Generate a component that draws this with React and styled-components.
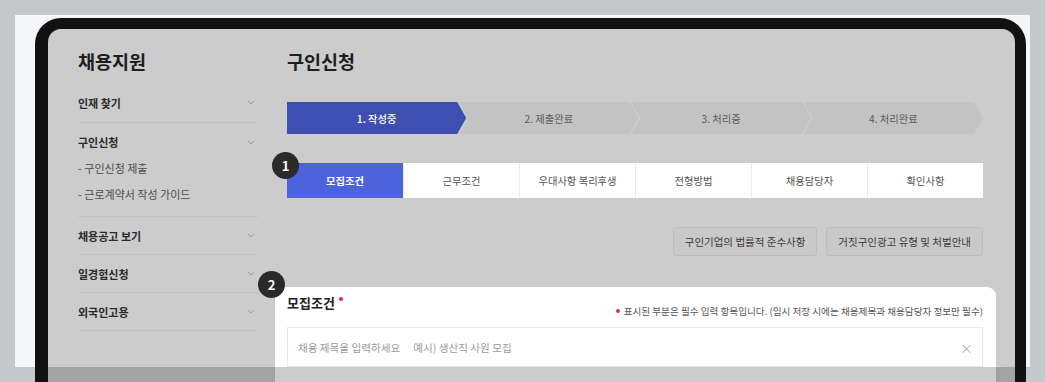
import React from 'react'
import styled, { createGlobalStyle } from 'styled-components'

const GlobalStyle = createGlobalStyle`
  html, body { margin: 0; padding: 0; }
  body {
    background: #c6c7cb;
    font-family: "Noto Sans CJK KR", "Noto Sans", sans-serif;
  }
  * { box-sizing: border-box; }
`

const steps = ['1. 작성중', '2. 제출완료', '3. 처리중', '4. 처리완료']
const tabs = ['모집조건', '근무조건', '우대사항 복리후생', '전형방법', '채용담당자', '확인사항']

const Chevron = () => (
  <svg width="8" height="5" viewBox="0 0 8 5">
    <polyline points="1,1 4,4 7,1" fill="none" stroke="#9c9c9c" strokeWidth="1" />
  </svg>
)

const App = () => {
  return (
    <Root>
      <GlobalStyle />
      <Panel>
        <Frame>
          <Screen>
            <Sidebar>
              <PageTitle>채용지원</PageTitle>
              <Menu>
                <MenuRow><span>인재 찾기</span><Chevron /></MenuRow>
                <MenuGroup>
                  <MenuHead><span>구인신청</span><Chevron /></MenuHead>
                  <SubList>
                    <SubItem>- 구인신청 제출</SubItem>
                    <SubItem>- 근로계약서 작성 가이드</SubItem>
                  </SubList>
                </MenuGroup>
                <MenuRow><span>채용공고 보기</span><Chevron /></MenuRow>
                <MenuRow><span>일경험신청</span><Chevron /></MenuRow>
                <MenuRow><span>외국인고용</span><Chevron /></MenuRow>
              </Menu>
            </Sidebar>

            <Main>
              <PageTitle>구인신청</PageTitle>
              <Progress>
                {steps.map((s, i) => (
                  <Step key={s} $active={i === 0} $first={i === 0}>{s}</Step>
                ))}
              </Progress>

              <Tabs>
                <Badge $x={-15} $y={-11}>1</Badge>
                {tabs.map((t, i) => (
                  <Tab key={t} $active={i === 0}>{t}</Tab>
                ))}
              </Tabs>

              <ButtonRow>
                <GhostButton>구인기업의 법률적 준수사항</GhostButton>
                <GhostButton>거짓구인광고 유형 및 처벌안내</GhostButton>
              </ButtonRow>

              <Card>
                <Badge $x={-17} $y={-16}>2</Badge>
                <CardHead>
                  <CardTitle>모집조건<RedDot $top={3} /></CardTitle>
                  <Note><RedDot $top={0} />표시된 부분은 필수 입력 항목입니다. (임시 저장 시에는 채용제목과 채용담당자 정보만 필수)</Note>
                </CardHead>
                <TextField>
                  <span>채용 제목을 입력하세요<Example>예시) 생산직 사원 모집</Example></span>
                  <Clear>×</Clear>
                </TextField>
              </Card>
            </Main>

            <BottomShade />
          </Screen>
        </Frame>
      </Panel>
    </Root>
  )
}

const Root = styled.div`
  width: 1045px;
  height: 382px;
  overflow: hidden;
  padding: 15px 15px 0;
`

const Panel = styled.div`
  width: 1015px;
  height: 352px;
  background: #f5f6fa;
  padding: 3px 0 0 20px;
`

const Frame = styled.div`
  width: 991px;
  height: 375px;
  background: #111;
  border-radius: 26px 26px 0 0;
  padding: 11px 11px 0 13px;
`

const Screen = styled.div`
  position: relative;
  height: 100%;
  background: #cccccc;
  border-radius: 13px 13px 0 0;
  overflow: hidden;
  display: grid;
  grid-template-columns: 180px 696px;
  column-gap: 29px;
  align-items: start;
  padding: 20px 32px 0 30px;
`

const BottomShade = styled.div`
  position: absolute;
  left: 0;
  right: 0;
  top: 338px;
  bottom: 0;
  background: rgba(0, 0, 0, 0.2);
  z-index: 5;
`

const Sidebar = styled.aside`
  display: flex;
  flex-direction: column;
`

const PageTitle = styled.h1`
  margin: 0;
  font-size: 18.5px;
  line-height: 24px;
  font-weight: 700;
  color: #1e1e1e;
`

const Menu = styled.nav`
  margin-top: 10px;
  display: flex;
  flex-direction: column;
`

const MenuRow = styled.div`
  height: 38px;
  display: flex;
  align-items: center;
  justify-content: space-between;
  padding-right: 3px;
  border-bottom: 1px solid #c0c0c0;
  font-size: 11px;
  font-weight: 700;
  color: #2a2a2a;

  &:first-child {
    height: 40px;
  }
`

const MenuGroup = styled.div`
  padding: 11px 3px 9px 0;
  border-bottom: 1px solid #c0c0c0;
`

const MenuHead = styled.div`
  height: 16px;
  display: flex;
  align-items: center;
  justify-content: space-between;
  font-size: 11px;
  font-weight: 700;
  color: #2a2a2a;
`

const SubList = styled.div`
  margin-top: 5px;
`

const SubItem = styled.div`
  line-height: 26px;
  font-size: 11px;
  color: #4e4e4e;
`

const Main = styled.main`
  display: flex;
  flex-direction: column;
`

const Progress = styled.div`
  margin-top: 29px;
  display: flex;
  height: 32px;
`

const Step = styled.div`
  flex: 1;
  display: flex;
  align-items: center;
  justify-content: center;
  font-size: 10.3px;
  font-weight: ${p => (p.$active ? 500 : 400)};
  color: ${p => (p.$active ? '#fff' : '#5c5c5c')};
  background: ${p => (p.$active ? '#3e4fb2' : '#c3c3c3')};
  clip-path: ${p =>
    p.$first
      ? 'polygon(0 0, calc(100% - 9px) 0, 100% 50%, calc(100% - 9px) 100%, 0 100%)'
      : 'polygon(0 0, calc(100% - 9px) 0, 100% 50%, calc(100% - 9px) 100%, 0 100%, 9px 50%)'};

  & + & {
    margin-left: -7px;
  }
`

const Tabs = styled.div`
  position: relative;
  margin-top: 29px;
  height: 35px;
  display: grid;
  grid-template-columns: repeat(6, 1fr);
  background: #fff;
`

const Tab = styled.div`
  display: flex;
  align-items: center;
  justify-content: center;
  font-size: 10.3px;
  font-weight: ${p => (p.$active ? 700 : 400)};
  color: ${p => (p.$active ? '#fff' : '#555')};
  background: ${p => (p.$active ? '#4d63dd' : '#fff')};

  & + & {
    border-left: 1px solid #ebebeb;
  }
`

const Badge = styled.span`
  position: absolute;
  left: ${p => p.$x}px;
  top: ${p => p.$y}px;
  width: 27px;
  height: 27px;
  border-radius: 50%;
  background: #2a2a2a;
  color: #fff;
  font-size: 13px;
  font-weight: 700;
  display: flex;
  align-items: center;
  justify-content: center;
  z-index: 2;
`

const ButtonRow = styled.div`
  margin-top: 29px;
  display: flex;
  justify-content: flex-end;
  gap: 9px;
`

const GhostButton = styled.button`
  height: 29px;
  padding: 0 11px;
  background: #c9c9c9;
  border: 1px solid #bcbcbc;
  border-radius: 3px;
  font-family: inherit;
  font-size: 10.5px;
  color: #3a3a3a;
`

const Card = styled.section`
  position: relative;
  margin: 31px -13px 0 -12px;
  padding: 7px 13px 30px 12px;
  background: #fff;
  border-top-right-radius: 9px;
`

const CardHead = styled.div`
  height: 23px;
  display: flex;
  justify-content: space-between;
`

const CardTitle = styled.h2`
  margin: 0;
  align-self: flex-start;
  display: flex;
  align-items: flex-start;
  font-size: 13px;
  line-height: 18px;
  font-weight: 700;
  color: #222;
`

const RedDot = styled.i`
  width: 4px;
  height: 4px;
  border-radius: 50%;
  background: #e6245b;
  margin: ${p => p.$top}px 4px 0 ${p => (p.$top ? 4 : 0)}px;
  align-self: ${p => (p.$top ? 'flex-start' : 'center')};
`

const Note = styled.p`
  margin: 0;
  align-self: flex-end;
  display: flex;
  align-items: center;
  font-size: 9.6px;
  line-height: 12px;
  color: #555;
`

const TextField = styled.div`
  margin-top: 10px;
  height: 40px;
  border: 1px solid #e8e8e8;
  padding: 0 9px 0 10px;
  display: flex;
  align-items: center;
  justify-content: space-between;
  font-size: 10.6px;
  color: #9a9a9a;
`

const Example = styled.span`
  margin-left: 13px;
`

const Clear = styled.span`
  font-size: 13px;
  color: #b0b0b0;
`

export default App
